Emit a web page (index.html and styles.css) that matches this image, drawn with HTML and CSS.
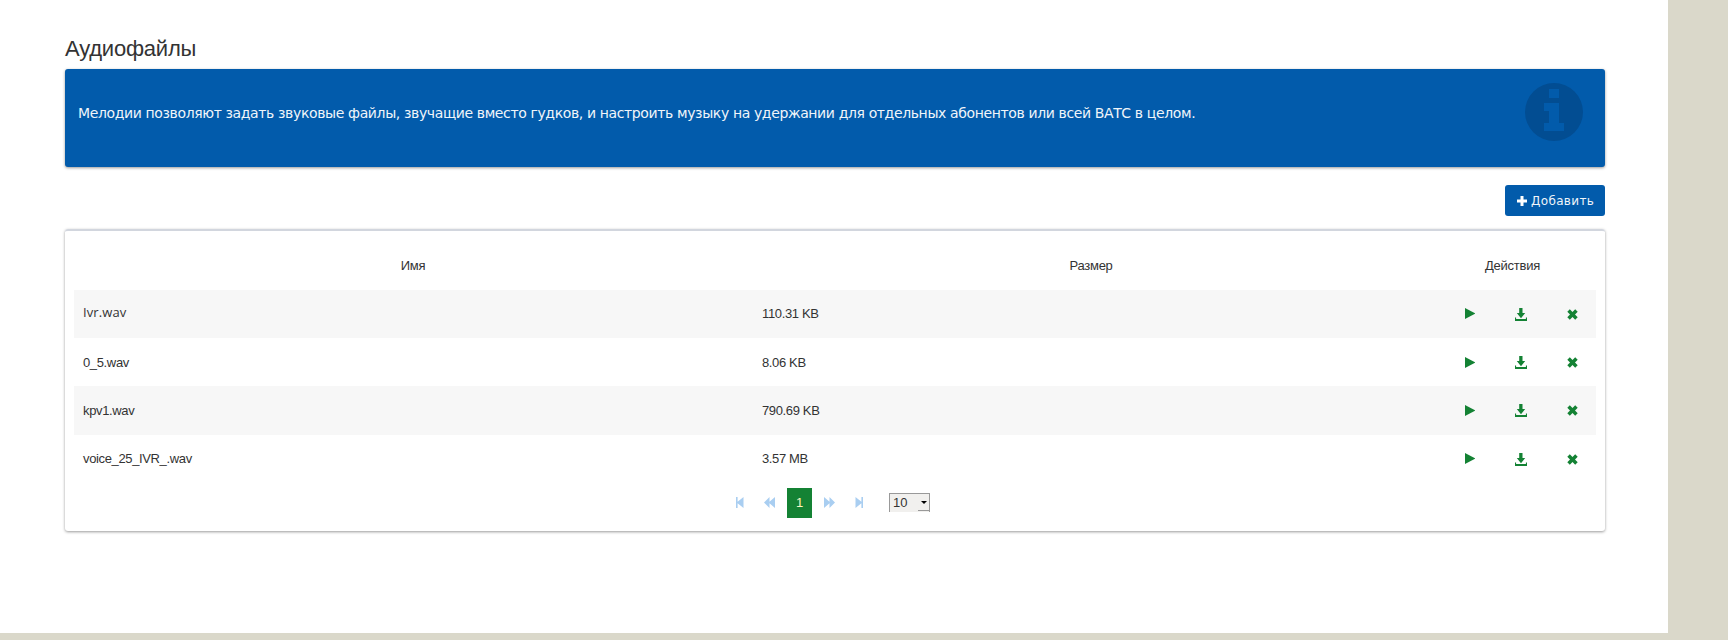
FILE: index.html
```
<!DOCTYPE html>
<html lang="ru">
<head>
<meta charset="utf-8">
<title>Аудиофайлы</title>
<link rel="stylesheet" href="styles.css">
</head>
<body>
<svg width="0" height="0" class="defs" aria-hidden="true">
  <symbol id="play" viewBox="0 0 10 11"><path d="M0 0L10 5.2V5.8L0 11z"/></symbol>
  <symbol id="download" viewBox="0 0 12 13"><path d="M4.200 0h3.300v5h2.700L6 10.300 1.800 5h2.400zM0 9.500h1.100V11h9.800V9.500H12V13H0z"/></symbol>
  <symbol id="remove" viewBox="0 0 11 11"><path d="M2.800 .3L5.500 3 8.200 .3 10.700 2.800 8 5.500 10.700 8.200 8.200 10.700 5.500 8 2.800 10.700 .3 8.200 3 5.500 .3 2.800z"/></symbol>
  <symbol id="first" viewBox="0 0 8 11"><path d="M0 0h1.600v4.800L7.500 0v11L1.600 6.200V11H0z"/></symbol>
  <symbol id="prev" viewBox="0 0 11 11"><path d="M5.500 0v4.700L11 0v11L5.500 6.300V11L0 5.500z"/></symbol>
</svg>
<main class="page">
  <h1 class="title">Аудиофайлы</h1>
  <section class="info">
    <p class="info-text">Мелодии позволяют задать звуковые файлы, звучащие вместо гудков, и настроить музыку на удержании для отдельных абонентов или всей ВАТС в целом.</p>
    <svg class="info-icon" viewBox="0 0 58 58"><path fill-rule="evenodd" d="M29 0a29 29 0 1 0 0 58a29 29 0 1 0 0-58zM24 6h10v9H24zM19 20h15v20h5v8H19v-8h5V28h-5z"/></svg>
  </section>
  <div class="toolbar">
    <button class="add"><svg class="plus" viewBox="0 0 10 10"><path d="M3.500 0h3v3.500H10v3H6.500V10h-3V6.500H0v-3h3.500z"/></svg><span>Добавить</span></button>
  </div>
  <section class="card">
    <table class="files">
      <colgroup><col class="c-name"><col class="c-size"><col class="c-act"></colgroup>
      <thead><tr><th>Имя</th><th>Размер</th><th>Действия</th></tr></thead>
      <tbody>
        <tr><td class="alt-face">Ivr.wav</td><td>110.31 KB</td><td><div class="actions"><svg class="play"><use href="#play"/></svg><svg class="download"><use href="#download"/></svg><svg class="remove"><use href="#remove"/></svg></div></td></tr>
        <tr><td>0_5.wav</td><td>8.06 KB</td><td><div class="actions"><svg class="play"><use href="#play"/></svg><svg class="download"><use href="#download"/></svg><svg class="remove"><use href="#remove"/></svg></div></td></tr>
        <tr><td>kpv1.wav</td><td>790.69 KB</td><td><div class="actions"><svg class="play"><use href="#play"/></svg><svg class="download"><use href="#download"/></svg><svg class="remove"><use href="#remove"/></svg></div></td></tr>
        <tr><td>voice_25_IVR_.wav</td><td>3.57 MB</td><td><div class="actions"><svg class="play"><use href="#play"/></svg><svg class="download"><use href="#download"/></svg><svg class="remove"><use href="#remove"/></svg></div></td></tr>
      </tbody>
    </table>
    <nav class="pager">
      <svg class="edge"><use href="#first"/></svg>
      <svg class="step"><use href="#prev"/></svg>
      <span class="current">1</span>
      <svg class="step flip"><use href="#prev"/></svg>
      <svg class="edge flip"><use href="#first"/></svg>
      <div class="size"><span>10</span><span class="arrow"><i class="caret"></i></span></div>
    </nav>
  </section>
</main>
</body>
</html>
```

FILE: styles.css
```
* { box-sizing: border-box; }
body {
  margin: 0;
  height: 640px;
  overflow: hidden;
  background: #dad8ca;
  color: #333;
  font: 13px/18px "Liberation Sans", Arial, sans-serif;
}
.defs { display: block; }
.page {
  width: 1668px;
  height: 633px;
  padding: 33px 63px 0 65px;
  background: #fff;
}
.title { margin: 0; height: 36px; font-size: 22px; line-height: 31px; font-weight: 400; letter-spacing: -.22px; }
.info {
  display: flex;
  justify-content: space-between;
  align-items: flex-start;
  height: 98px;
  padding: 14px 22px 0 13px;
  border-radius: 3px;
  background: #025bab;
  color: #f0f5fa;
  box-shadow: 0 1px 3px rgba(0, 0, 0, .4);
}
.info-text { margin: 21px 0 0; font: 14px/18px "DejaVu Sans", sans-serif; letter-spacing: -.375px; white-space: nowrap; }
.info-icon { width: 58px; height: 58px; fill: #024d92; }
.toolbar { display: flex; justify-content: flex-end; padding: 18px 0 13px; }
.add {
  display: flex;
  align-items: center;
  gap: 4px;
  width: 100px;
  height: 31px;
  padding: 0 0 0 12px;
  border: 0;
  border-radius: 3px;
  background: #025bab;
  color: #f0f5fa;
  font: 12px/18px "DejaVu Sans", sans-serif;
  letter-spacing: .35px;
  white-space: nowrap;
}
.plus { width: 10px; height: 10px; fill: #fff; }
.card {
  height: 302px;
  padding: 11px 9px 0;
  border-top: 2px solid #d2d6de;
  border-radius: 3px;
  box-shadow: 0 1px 3px rgba(0, 0, 0, .4);
}
.files { width: 1522px; table-layout: fixed; border-collapse: collapse; letter-spacing: -.36px; }
.c-name { width: 679px; }
.c-size { width: 677px; }
.c-act { width: 166px; }
.files th, .files td { padding: 0 9px; font-weight: 400; height: 48px; }
.files th { padding-right: 10px; letter-spacing: -.25px; }
.files tbody tr:nth-child(2) td { padding-top: 1px; }
.files tbody tr:nth-child(3) td { height: 49px; }
.files td { text-align: left; }
.files tbody tr:nth-child(odd) { background: #f7f7f7; }
.files .alt-face { padding-bottom: 4px; font: 13px/18px "Open Sans", sans-serif; letter-spacing: .1px; }
.actions { display: flex; align-items: center; padding-left: 26px; fill: #148234; }
.play { width: 10px; height: 11px; margin: -1px 40px 0 0; }
.download { width: 12px; height: 13px; margin-right: 40px; }
.remove { width: 11px; height: 11px; }
.pager { display: flex; align-items: center; margin: 5px 0 0 662px; fill: #a9cef1; height: 30px; }
.edge, .step { margin-top: -2px; }
.edge { width: 8px; height: 11px; }
.step { width: 11px; height: 11px; margin-left: 20px; }
.flip { transform: scaleX(-1); }
.current {
  width: 25px;
  height: 30px;
  margin-left: 12px;
  background: #148234;
  color: #fdf6c0;
  line-height: 29px;
  text-align: center;
}
.current + .step { margin-left: 12px; }
.step + .edge { margin-left: 20px; }
.size {
  display: flex;
  justify-content: space-between;
  width: 41px;
  height: 19px;
  margin: -2px 0 0 26px;
  padding-left: 3px;
  border: 1px solid #999;
  border-bottom: 0;
  background: #f1f0ee;
  line-height: 18px;
}
.arrow { display: flex; align-items: center; justify-content: center; width: 11px; height: 17px; padding-top: 2px; border-bottom: 1px solid #999; }
.caret { border: 3px solid transparent; border-top-color: #000; border-bottom: 0; }
```
